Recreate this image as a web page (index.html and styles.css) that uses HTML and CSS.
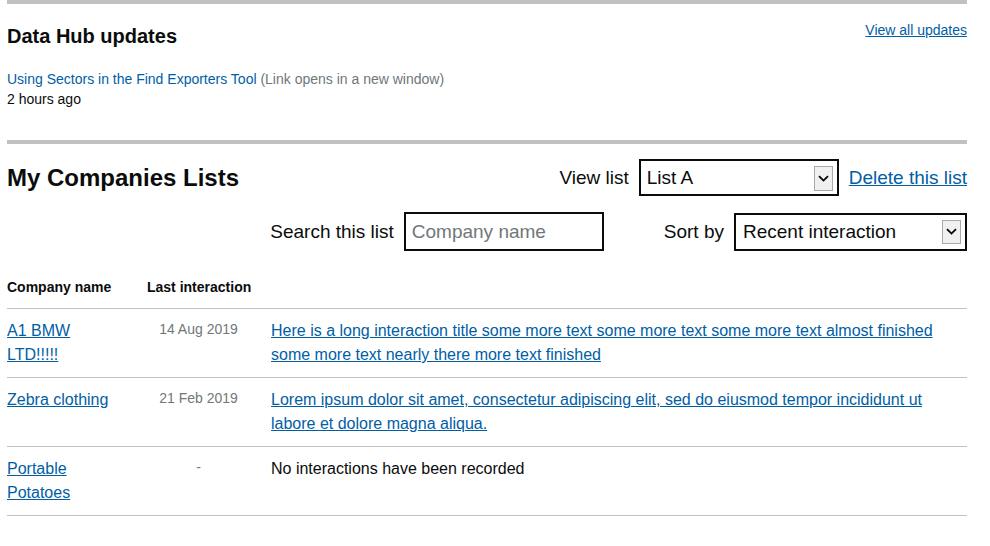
FILE: index.html
```html
<!DOCTYPE html>
<html lang="en">
<head>
<meta charset="utf-8">
<title>Dashboard</title>
<link rel="stylesheet" href="styles.css">
</head>
<body>
<main class="page">
  <section class="updates">
    <div class="updates-head">
      <h2 class="updates-title">Data Hub updates</h2>
      <a class="small-link" href="#">View all updates</a>
    </div>
    <div class="update-item">
      <a class="update-link" href="#">Using Sectors in the Find Exporters Tool</a> <span class="muted">(Link opens in a new window)</span>
    </div>
    <div class="update-time">2 hours ago</div>
  </section>

  <section class="lists">
    <div class="lists-head">
      <h2 class="lists-title">My Companies Lists</h2>
      <div class="control">
        <label class="control-label" for="viewlist">View list</label>
        <span class="select-wrap select-list">
          <select id="viewlist" class="select"><option>List A</option></select>
          <span class="select-arrow"><svg width="11" height="7" viewBox="0 0 11 7"><path d="M1 1.2 L5.5 5.6 L10 1.2" fill="none" stroke="#000" stroke-width="1.8"/></svg></span>
        </span>
        <a class="big-link" href="#">Delete this list</a>
      </div>
    </div>
    <div class="filters">
      <div class="control">
        <label class="control-label" for="search">Search this list</label>
        <input id="search" class="input" type="text" placeholder="Company name">
      </div>
      <div class="control sort">
        <label class="control-label" for="sort">Sort by</label>
        <span class="select-wrap select-sort">
          <select id="sort" class="select"><option>Recent interaction</option></select>
          <span class="select-arrow"><svg width="11" height="7" viewBox="0 0 11 7"><path d="M1 1.2 L5.5 5.6 L10 1.2" fill="none" stroke="#000" stroke-width="1.8"/></svg></span>
        </span>
      </div>
    </div>

    <div class="table">
      <div class="row head">
        <div class="cell c1">Company name</div>
        <div class="cell c2 head-c2">Last interaction</div>
        <div class="cell c3"></div>
      </div>
      <div class="row">
        <div class="cell c1"><a href="#">A1 BMW LTD!!!!!</a></div>
        <div class="cell c2 date">14 Aug 2019</div>
        <div class="cell c3"><a href="#">Here is a long interaction title some more text some more text some more text almost finished some more text nearly there more text finished</a></div>
      </div>
      <div class="row">
        <div class="cell c1"><a href="#">Zebra clothing</a></div>
        <div class="cell c2 date">21 Feb 2019</div>
        <div class="cell c3"><a href="#">Lorem ipsum dolor sit amet, consectetur adipiscing elit, sed do eiusmod tempor incididunt ut labore et dolore magna aliqua.</a></div>
      </div>
      <div class="row">
        <div class="cell c1"><a href="#">Portable Potatoes</a></div>
        <div class="cell c2 date">-</div>
        <div class="cell c3 plain">No interactions have been recorded</div>
      </div>
    </div>
  </section>
</main>
</body>
</html>
```

FILE: styles.css
```css
* { box-sizing: border-box; }
html, body { margin: 0; padding: 0; background: #fff; }
body {
  font-family: "Liberation Sans", Arial, sans-serif;
  color: #0b0c0c;
}
a { color: #005ea5; }

.page {
  width: 960px;
  margin-left: 7px;
}

.updates {
  border-top: 4px solid #bfc1c3;
  padding-bottom: 31px;
}
.updates-head {
  display: flex;
  justify-content: space-between;
  align-items: flex-start;
}
.updates-title {
  margin: 21px 0 0;
  font-size: 20px;
  line-height: 23px;
  font-weight: bold;
}
.small-link {
  margin-top: 18px;
  font-size: 14px;
  line-height: 16px;
}
.update-item {
  margin-top: 21px;
  font-size: 14px;
  line-height: 20px;
}
.update-link { text-decoration: none; }
.muted { color: #6f777b; }
.update-time {
  font-size: 14px;
  line-height: 20px;
}

.lists {
  border-top: 4px solid #bfc1c3;
}
.lists-head {
  display: flex;
  justify-content: space-between;
  align-items: center;
  margin-top: 15px;
  height: 37px;
}
.lists-title {
  margin: 0;
  font-size: 24px;
  line-height: 28px;
  font-weight: bold;
}
.control {
  display: flex;
  align-items: center;
  gap: 10px;
  font-size: 19px;
}
.control-label { line-height: 22px; }
.big-link { font-size: 19px; line-height: 22px; }

.select-wrap {
  position: relative;
  display: block;
}
.select {
  appearance: none;
  -webkit-appearance: none;
  display: block;
  margin: 0;
  border: 2px solid #0b0c0c;
  border-radius: 0;
  background: #fff;
  font-family: "Liberation Sans", Arial, sans-serif;
  font-size: 19px;
  color: #0b0c0c;
  padding: 0 30px 0 6px;
}
.select-list .select { width: 200px; height: 37px; }
.select-sort .select { width: 233px; height: 38px; padding-left: 7px; }
.select-arrow {
  position: absolute;
  top: 7px;
  right: 6px;
  width: 19px;
  height: 25px;
  border: 1px solid #a9a9a9;
  background: #f0f0f0;
  display: flex;
  align-items: center;
  justify-content: center;
  pointer-events: none;
}
.select-sort .select-arrow { height: 24px; }

.filters {
  display: flex;
  justify-content: flex-end;
  align-items: center;
  gap: 60px;
  margin-top: 16px;
}
.input {
  width: 200px;
  height: 39px;
  margin: 0;
  border: 2px solid #0b0c0c;
  border-radius: 0;
  padding: 0 6px;
  font-family: "Liberation Sans", Arial, sans-serif;
  font-size: 19px;
  color: #0b0c0c;
}
.input::placeholder { color: #6f777b; opacity: 1; }

.table { margin-top: 28px; }
.row {
  display: grid;
  grid-template-columns: 140px 124px 1fr;
  border-bottom: 1px solid #bfc1c3;
  padding: 10px 0 10px;
}
.row.head { padding: 0 0 13px; }
.cell {
  font-size: 16px;
  line-height: 24px;
}
.c1 { padding-right: 30px; }
.c2 { padding-right: 21px; }
.head .cell {
  font-size: 14px;
  line-height: 16px;
  font-weight: bold;
}
.head-c2 { white-space: nowrap; }
.date {
  font-size: 14px;
  line-height: 20px;
  color: #6f777b;
  text-align: center;
}
.plain { color: #0b0c0c; }
```
